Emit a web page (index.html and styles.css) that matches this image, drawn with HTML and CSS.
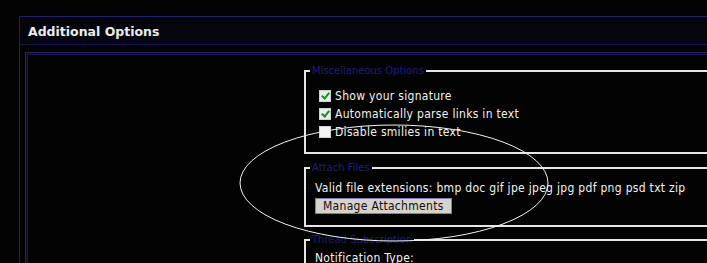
FILE: index.html
```html
<!DOCTYPE html>
<html lang="en">
<head>
    <meta charset="UTF-8">
    <title>Additional Options</title>
    <link rel="stylesheet" href="styles.css">
</head>
<body>
    <div class="panel">
        <div class="panel-head">Additional Options</div>
        <div class="panel-body">
            <div class="options">
                <fieldset class="group misc">
                    <legend>Miscellaneous Options</legend>
                    <label class="check"><span class="box checked"></span>Show your signature</label>
                    <label class="check"><span class="box checked"></span>Automatically parse links in text</label>
                    <label class="check"><span class="box"></span>Disable smilies in text</label>
                </fieldset>

                <fieldset class="group attach">
                    <legend>Attach Files</legend>
                    <div class="line">Valid file extensions: bmp doc gif jpe jpeg jpg pdf png psd txt zip</div>
                    <button class="manage-button" type="button">Manage Attachments</button>
                </fieldset>

                <fieldset class="group subscribe">
                    <legend>Thread Subscription</legend>
                    <div class="line">Notification Type:</div>
                </fieldset>
            </div>
        </div>
    </div>

    <!-- circled note -->
    <svg class="circle-mark" width="316" height="124" viewBox="0 0 316 124">
        <ellipse cx="157" cy="61" rx="154" ry="58" fill="none" stroke="#f2f2f2" stroke-width="1"/>
    </svg>
</body>
</html>
```

FILE: styles.css
```css
body {
    margin: 0;
    background: #030303;
    color: #f0f0f0;
    font-family: 'DejaVu Sans', Verdana, sans-serif;
    overflow: hidden;
    height: 263px;
}

.panel {
    margin: 16px 0 0 19px;
    border: 1px solid #1f2070;
    border-right: none;
    height: 400px;
}

.panel-head {
    height: 25px;
    line-height: 25px;
    padding: 2px 0 0 8px;
    font-size: 12.5px;
    font-weight: bold;
    color: #ececec;
    background: #05050d;
    border-bottom: 1px solid #15154a;
}

.panel-body {
    margin: 7px 0 0 5px;
    border-left: 1px solid #23235e;
    border-top: 1px solid #23235e;
    box-shadow: inset 1px 1px 0 #0b0b24, inset 2px 2px 0 #1a1a4a;
    height: 360px;
}

.options {
    margin-left: 278px;
    padding-top: 12px;
}

.group {
    margin: 0;
    padding: 0 8px 10px 9px;
    border: 2px solid #e6e6e6;
    border-right: none;
    width: 600px;
}

.group legend {
    padding: 0 2px;
    margin-left: -5px;
    font-size: 10px;
    line-height: 12px;
    color: #1e1e7a;
}

.misc {
    padding-top: 10px;
    padding-bottom: 11px;
}

.attach {
    margin-top: 8px;
    padding-top: 5px;
    padding-bottom: 11px;
}

.subscribe {
    margin-top: 7px;
    padding-top: 3px;
}

.check,
.line,
.manage-button {
    font-family: 'DejaVu Sans Condensed', 'DejaVu Sans', sans-serif;
    font-size: 12px;
    letter-spacing: 0.3px;
}

.check {
    display: flex;
    align-items: center;
    height: 18px;
    color: #f2f2f2;
}

.box {
    width: 10px;
    height: 10px;
    margin: 0 4px 0 4px;
    background: #f4f4f4;
    border: 1px solid #cfcfcf;
    position: relative;
}

.box.checked {
    background: #e6eee6;
}

.box.checked::after {
    content: "";
    position: absolute;
    left: 3px;
    top: 0;
    width: 3px;
    height: 6px;
    border: solid #1c8a2c;
    border-width: 0 2px 2px 0;
    transform: rotate(40deg);
}

.line {
    height: 18px;
    line-height: 18px;
    color: #f2f2f2;
}

.manage-button {
    display: block;
    margin-top: 1px;
    padding: 0 7px;
    height: 16px;
    line-height: 14px;
    color: #111;
    background: #d6d3cc;
    border: 1px solid #8080b0;
    border-radius: 0;
}

.circle-mark {
    position: absolute;
    left: 237px;
    top: 122px;
}
```
